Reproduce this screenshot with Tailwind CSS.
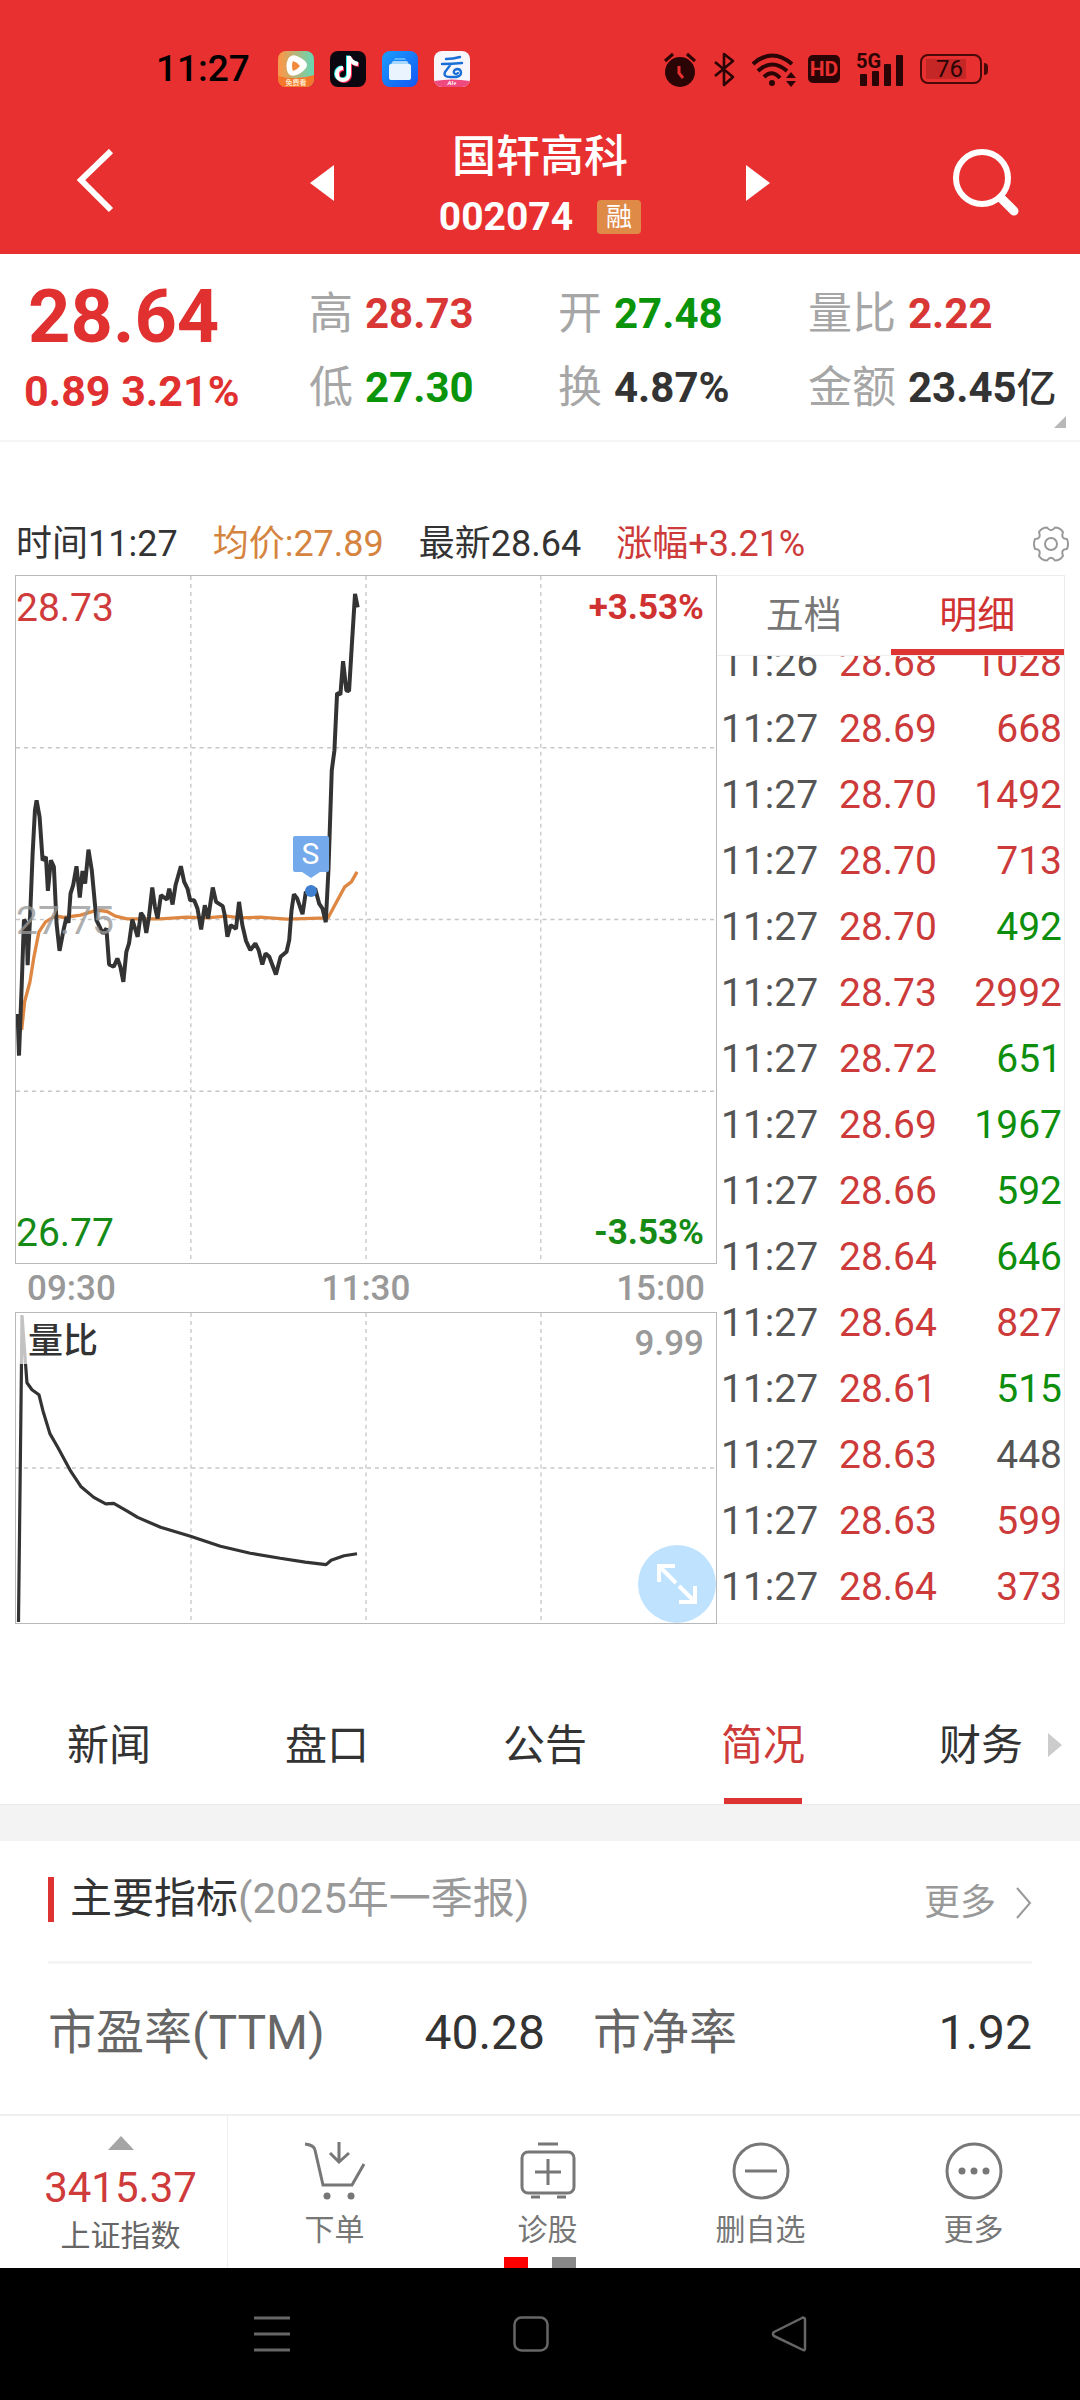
<!DOCTYPE html>
<html lang="zh-CN">
<head>
  <meta charset="UTF-8" />
  <meta name="viewport" content="width=device-width, initial-scale=1" />
  <title>国轩高科 002074</title>
  <script src="https://cdn.jsdelivr.net/npm/@tailwindcss/browser@4"></script>
</head>
<body class="min-h-screen flex flex-col bg-white text-[#333] font-['Roboto','Noto_Sans_CJK_SC',sans-serif]">

  <header class="bg-[#e7302f]">
    <!-- Status bar -->
    <div class="flex items-center justify-between h-[88px] pt-[50px] pl-[156px] pr-[92px] text-[#2b0505]">
      <div class="flex items-center gap-4 h-9">
        <span class="text-[37px] leading-9 font-medium text-black mr-3">11:27</span>
        <svg class="size-9" viewBox="0 0 36 36" aria-hidden="true">
          <defs>
            <linearGradient id="video-bg" x1="0" y1="0" x2="1" y2="0"><stop offset="0.1" stop-color="#f59a4c" /><stop offset="0.9" stop-color="#6fd3ae" /></linearGradient>
            <clipPath id="app-clip"><rect width="36" height="36" rx="8" /></clipPath>
          </defs>
          <g clip-path="url(#app-clip)">
            <rect width="36" height="36" fill="url(#video-bg)" />
            <path d="M0 25q18 5 36-1v12H0z" fill="#f4772c" />
            <path d="M13 5q3-2 8 1 8 4 8 8t-8 9q-8 4-11-1-3-7 0-14 1-2 3-3z" fill="#fff" />
            <path d="M15 10q4 1 7 5-3 4-7 5-2-5 0-10z" fill="#f08a3a" />
            <text x="18" y="34" font-size="7" font-weight="700" text-anchor="middle" fill="#fde6c8">免费看</text>
          </g>
        </svg>
        <svg class="size-9" viewBox="0 0 36 36" aria-hidden="true">
          <rect width="36" height="36" rx="8" fill="#0b0710" />
          <g fill="none" stroke-width="4">
            <path d="M19 5v18a6 6 0 1 1-6-6M19 6q2 6 9 7" stroke="#25f4ee" transform="translate(-1 -0.5)" />
            <path d="M19 5v18a6 6 0 1 1-6-6M19 6q2 6 9 7" stroke="#fe2c55" transform="translate(1 1)" />
            <path d="M19 5v18a6 6 0 1 1-6-6M19 6q2 6 9 7" stroke="#fff" />
          </g>
        </svg>
        <svg class="size-9" viewBox="0 0 36 36" aria-hidden="true">
          <defs><linearGradient id="file-bg" x1="0" y1="0" x2="1" y2="1"><stop offset="0" stop-color="#1b9dfb" /><stop offset="1" stop-color="#1357f5" /></linearGradient></defs>
          <rect width="36" height="36" rx="8" fill="url(#file-bg)" />
          <path d="M13 7h10l1 2H12z" fill="#5db6fb" />
          <path d="M11 10h14l2 3H9z" fill="#a9d8fd" />
          <rect x="7" y="13" width="22" height="16" rx="2" fill="#e9f4ff" />
        </svg>
        <svg class="size-9" viewBox="0 0 36 36" aria-hidden="true">
          <g clip-path="url(#app-clip)">
            <rect width="36" height="36" fill="#f8f6fd" />
            <path d="M0 30q18-3 36 0v6H0z" fill="#ee4a80" />
            <path d="M12 8q7 0 14-2M8 13q10 0 20-1M17 13q-3 4-6 8-2 5 5 5h6q5-1 5-4 0-4-4-4-4 1-3 4 2 2 4 0" fill="none" stroke="#1a6fd6" stroke-width="2.4" stroke-linecap="round" />
            <text x="18" y="34" font-size="6" font-weight="700" font-style="italic" text-anchor="middle" fill="#fff">AI+</text>
          </g>
        </svg>
      </div>
      <div class="flex items-center gap-4 h-9">
        <svg class="w-8 h-9" viewBox="0 0 32 36" aria-hidden="true">
          <circle cx="16" cy="21" r="15" fill="currentColor" />
          <path d="M1 10l8-7M31 10l-8-7" stroke="currentColor" stroke-width="3" />
          <path d="M15 15v7l4 5" fill="none" stroke="#e7302f" stroke-width="3" />
        </svg>
        <svg class="w-6 h-9" viewBox="0 0 24 36" fill="none" stroke="currentColor" stroke-width="2.6" stroke-linejoin="round" aria-hidden="true">
          <path d="M3 11l18 15-9 8V3l9 7L3 25" />
        </svg>
        <svg class="w-11 h-9" viewBox="0 0 44 36" fill="none" stroke="currentColor" stroke-width="4" aria-hidden="true">
          <path d="M1 13q19-17 39 0M6 20q14-13 29 0M12 26q8-8 16 1" />
          <circle cx="20" cy="32" r="3" fill="currentColor" stroke="none" />
          <path d="M34 27l5-6 5 6zM34 30h10l-5 6z" fill="currentColor" stroke="none" />
        </svg>
        <span class="flex items-center justify-center w-8 h-7 -ml-1 rounded-[5px] bg-[#2b0505] text-[#e7302f] text-[21px] leading-7 font-bold">HD</span>
        <div class="relative w-12 h-9">
          <span class="absolute left-0 top-0 text-[20px] leading-5 font-bold">5G</span>
          <svg class="w-12 h-9" viewBox="0 0 48 36" fill="currentColor" aria-hidden="true">
            <rect x="4" y="23" width="7" height="12" rx="1" /><rect x="16" y="20" width="7" height="15" rx="1" /><rect x="28" y="13" width="7" height="22" rx="1" /><rect x="40" y="4" width="7" height="31" rx="1" />
          </svg>
        </div>
        <div class="flex items-center">
          <span class="flex items-center w-[62px] h-[30px] p-1 rounded-lg border-2 border-[#4a0909]">
            <span class="w-[40px] h-5 bg-[#c52626] text-[24px] leading-5 pl-2.5">76</span>
          </span>
          <span class="w-1 h-3 bg-[#4a0909] rounded-r-sm ml-0.5"></span>
        </div>
      </div>
    </div>

    <!-- Title bar -->
    <div class="flex items-center justify-between h-[166px] pl-[76px] pr-[60px] text-white">
      <button aria-label="返回" class="w-10 h-16 mt-5">
        <svg class="w-10 h-16" viewBox="0 0 40 64" fill="none" stroke="currentColor" stroke-width="6" aria-hidden="true"><path d="M35 2L5 31l30 30" /></svg>
      </button>
      <div class="flex items-center justify-between w-[460px] ml-3">
        <button aria-label="上一只"><svg class="w-6 h-9 mt-6" viewBox="0 0 24 36" fill="currentColor" aria-hidden="true"><path d="M0 18L24 0v36z" /></svg></button>
        <div class="pt-8 text-center">
          <h1 class="text-[44px] leading-[56px] font-medium">国轩高科</h1>
          <div class="flex items-center gap-6 mt-1">
            <span class="text-[39px] leading-[56px] font-bold">002074</span>
            <span class="w-11 h-[34px] rounded-sm bg-[#e08a48] text-[26px] leading-[34px]">融</span>
          </div>
        </div>
        <button aria-label="下一只"><svg class="w-6 h-9 mt-6" viewBox="0 0 24 36" fill="currentColor" aria-hidden="true"><path d="M24 18L0 0v36z" /></svg></button>
      </div>
      <button aria-label="搜索" class="mt-6">
        <svg class="w-[68px] h-[68px]" viewBox="0 0 68 68" fill="none" stroke="currentColor" aria-hidden="true">
          <circle cx="30" cy="29" r="26" stroke-width="6" /><path d="M49 49l13 13" stroke-width="9" stroke-linecap="round" />
        </svg>
      </button>
    </div>
  </header>

  <!-- Quote summary -->
  <section class="relative grid grid-cols-[309fr_249fr_250fr_272fr] h-[188px] pt-[23px] border-b-2 border-[#f6f6f6] text-[42px] leading-[74px] font-bold whitespace-nowrap">
    <div class="pl-6 pt-[3px] text-[#e03030]">
      <div class="pl-1 text-[74px]">28.64</div>
      <div class="text-[43px]">0.89 3.21%</div>
    </div>
    <dl>
      <div class="flex gap-3"><dt class="text-[44px] font-normal text-[#a6a6a6]">高</dt><dd class="text-[#d93636]">28.73</dd></div>
      <div class="flex gap-3"><dt class="text-[44px] font-normal text-[#a6a6a6]">低</dt><dd class="text-[#0a940a]">27.30</dd></div>
    </dl>
    <dl>
      <div class="flex gap-3"><dt class="text-[44px] font-normal text-[#a6a6a6]">开</dt><dd class="text-[#0a940a]">27.48</dd></div>
      <div class="flex gap-3"><dt class="text-[44px] font-normal text-[#a6a6a6]">换</dt><dd>4.87%</dd></div>
    </dl>
    <dl>
      <div class="flex gap-3"><dt class="text-[44px] font-normal text-[#a6a6a6]">量比</dt><dd class="text-[#d93636]">2.22</dd></div>
      <div class="flex gap-3"><dt class="text-[44px] font-normal text-[#a6a6a6]">金额</dt><dd>23.45<span class="text-[40px] font-medium">亿</span></dd></div>
    </dl>
    <svg class="absolute right-[14px] bottom-3 size-3" viewBox="0 0 12 12" aria-hidden="true"><path d="M12 0v12H0z" fill="#b8b8b8" /></svg>
  </section>

  <!-- Crosshair info -->
  <div class="flex items-center gap-[35px] h-[62px] mt-[71px] pl-4 pr-[11px] text-[36px] leading-none whitespace-nowrap">
    <span>时间11:27</span>
    <span class="text-[#d5843f]">均价:27.89</span>
    <span>最新28.64</span>
    <span class="text-[#cc3a3a]">涨幅+3.21%</span>
    <button aria-label="设置" class="ml-auto">
      <svg class="w-9 h-[38px]" viewBox="0 0 36 38" fill="none" stroke="#999" stroke-width="2" stroke-linejoin="round" aria-hidden="true">
        <path d="M34 14Q36 19 34 24 27.500 24 30 31 27 35.500 22 35.500 18 30 14 35.500 9 35.500 6 31 8.500 24 2 24 0 19 2 14 8.500 14 6 7 9 2.500 14 2.500 18 8 22 2.500 27 2.500 30 7 27.500 14 34 14z" />
        <circle cx="18" cy="19" r="6" />
      </svg>
    </button>
  </div>

  <main class="grid grid-cols-[702fr_348fr] mx-[15px]">
    <!-- Charts -->
    <div>
      <div class="relative h-[689px] border border-[#b9b9b9]">
        <svg class="absolute inset-0 w-full h-full" viewBox="0 0 2106 2064" preserveAspectRatio="none" fill="none" aria-hidden="true">
          <path d="M526 0v2064M1053 0v2064M1579 0v2064M0 516h2106M0 1032h2106M0 1548h2106" stroke="#c6c6c6" stroke-width="4" stroke-dasharray="12 12" />
          <g transform="translate(-46 -16)" stroke-linejoin="bevel">
            <path stroke="#dd8743" stroke-width="10" d="M63 1380L72 1295 88 1235 100 1160 115 1085 135 1055 165 1037 190 1042 240 1035 290 1020 320 1024 345 1038 380 1046 480 1046 560 1041 620 1043 680 1038 720 1043 780 1041 860 1047 985 1043 1005 1005 1035 950 1055 935 1072 905" />
            <path stroke="#333" stroke-width="12" d="M51 1332L55 1457 63 1250 70 1048 78 1060 81 1185 88 1050 96 850 103 720 108 690 117 740 126 870 136 860 142 962 151 870 160 890 168 1060 177 1142 190 1075 198 1040 204 1058 210 970 218 945 228 888 238 982 246 902 254 940 264 838 274 900 288 1050 300 1075 307 1090 318 1075 326 1183 340 1190 351 1165 360 1190 369 1235 378 1145 386 1120 396 1048 412 1100 422 1028 430 1040 438 1088 446 1040 456 952 464 1010 472 1045 482 975 500 988 507 955 517 1003 526 945 542 888 552 935 562 955 570 990 582 990 592 1015 603 1078 614 1005 624 1045 638 952 648 995 668 1008 674 1035 682 1100 692 1065 708 1076 717 995 727 1065 738 1112 751 1140 766 1120 776 1140 787 1183 797 1150 808 1160 828 1213 842 1160 860 1145 868 1110 875 1020 882 972 892 985 908 1032 918 965 930 970 946 955 958 1000 968 1015 978 1056 986 900 996 600 1004 540 1012 368 1022 372 1030 272 1040 360 1048 362 1056 230 1066 70 1074 110" />
          </g>
        </svg>
        <div class="relative flex flex-col justify-between h-full pt-0.5 text-[39px] leading-[60px]">
          <div class="flex justify-between"><span class="text-[#cf3a3a]">28.73</span><span class="text-[35px] font-bold text-[#d03232] pr-3">+3.53%</span></div>
          <div class="text-[#999]/80">27.75</div>
          <div class="flex justify-between"><span class="text-[#158a15]">26.77</span><span class="text-[35px] font-bold text-[#158a15] pr-3">-3.53%</span></div>
        </div>
        <!-- Sell marker -->
        <div class="absolute left-[39.5%] top-[260px] flex flex-col items-center">
          <span class="w-9 h-9 rounded-xs bg-[#74a9ec] text-white text-[30px] leading-9 text-center">S</span>
          <svg class="w-9 h-7" viewBox="0 0 36 28" aria-hidden="true"><path d="M9 0h18l-9 6z" fill="#74a9ec" /><circle cx="18" cy="19" r="6" fill="#3f7fd0" /></svg>
        </div>
      </div>

      <div class="flex justify-between h-12 pl-3 pr-3 text-[35px] leading-[50px] font-medium text-[#999]">
        <span>09:30</span><span>11:30</span><span>15:00</span>
      </div>

      <div class="relative h-[312px] border border-[#b9b9b9]">
        <svg class="absolute inset-0 w-full h-full" viewBox="0 0 702 311" preserveAspectRatio="none" fill="none" aria-hidden="true">
          <path d="M175.500 0v311M351 0v311M526.500 0v311M0 155.500h702" stroke="#c6c6c6" stroke-width="1.300" stroke-dasharray="4 4" />
          <path stroke="#333" stroke-width="3.200" stroke-linejoin="bevel" d="M2.500 310L5.500 50 6 2 9.500 50 11 70 16 77 23 82 27 98 34 121 42 135 55 159 65 174 78 185 90 191.500 98 191 112 199 122 205 145 215 175 224 205 234 235 241 265 246 290 250 311 252.500 316 248 329 243.500 342 241.500" />
        </svg>
        <div class="relative flex justify-between text-[35px] leading-[41px] font-medium">
          <span class="pl-3 pt-2 bg-white/70">量比</span>
          <span class="pr-3 pt-2.5 text-[#999]">9.99</span>
        </div>
        <button aria-label="全屏" class="absolute right-0 bottom-0 flex items-center justify-center size-[78px] rounded-full bg-[#bfe3ff]">
          <svg class="size-10" viewBox="0 0 40 40" fill="none" stroke="#fff" stroke-width="4" aria-hidden="true"><path d="M18 2H2v16M2 2l17 17M38 22v16H22M38 38L22 22" /></svg>
        </button>
      </div>
    </div>

    <!-- Trade ticks -->
    <div class="flex flex-col h-[1049px] border border-l-0 border-[#ececec]">
      <div class="grid grid-cols-2 shrink-0 h-20 border-b border-[#eee] text-[38px]">
        <button class="text-[#777]">五档</button>
        <button class="text-[#d03232] border-b-6 border-[#dd3333] pt-1.5">明细</button>
      </div>
      <div class="flex flex-col justify-end flex-1 min-h-0 overflow-hidden pb-[3px]">
        <table class="w-full text-[39px] leading-none">
          <tbody id="ticks"></tbody>
        </table>
      </div>
    </div>
  </main>

  <!-- Section tabs -->
  <nav class="relative mt-[63px] h-[117px] overflow-hidden text-[42px] leading-none">
    <div class="grid grid-cols-5 w-[calc(100%+10px)] h-full">
      <button>新闻</button>
      <button>盘口</button>
      <button>公告</button>
      <button class="flex flex-col items-center justify-between pt-[38px] text-[#cc3a3a]">简况<span class="w-[78px] h-1.5 bg-[#dd3333]"></span></button>
      <button>财务</button>
    </div>
    <svg class="absolute right-[18px] top-[46px] w-3.5 h-6" viewBox="0 0 14 24" aria-hidden="true"><path d="M0 0l14 12L0 24z" fill="#ccc" /></svg>
  </nav>

  <div class="h-[37px] bg-[#f3f3f3] border-t border-[#e9e9e9]"></div>

  <!-- Key indicators -->
  <section class="px-12">
    <div class="flex items-center h-[123px] pb-1 border-b-3 border-[#f5f3f3]">
      <span class="w-1.5 h-[45px] mr-4 bg-[#dd3333]"></span>
      <h2 class="text-[42px] leading-none">主要指标<span class="text-[#999]">(2025年一季报)</span></h2>
      <a href="#" class="flex items-center gap-5 ml-auto pt-2 text-[36px] leading-none text-[#999]">更多
        <svg class="w-4 h-8" viewBox="0 0 16 32" fill="none" stroke="currentColor" stroke-width="2" aria-hidden="true"><path d="M1 1l13 15L1 31" /></svg>
      </a>
    </div>
    <dl class="grid grid-cols-[497fr_439fr] gap-12 h-[138px] text-[48px] leading-[138px]">
      <div class="flex justify-between"><dt class="text-[#666]">市盈率(TTM)</dt><dd>40.28</dd></div>
      <div class="flex justify-between"><dt class="text-[#666]">市净率</dt><dd>1.92</dd></div>
    </dl>
  </section>

  <footer class="mt-auto">
    <div class="relative grid grid-cols-[228fr_213fr_213fr_213fr_213fr] h-[154px] border-t-2 border-[#efefef] text-[30px] leading-9 text-[#777]">
      <button class="flex flex-col items-center pt-5 pl-3.5 border-r border-[#eee]">
        <svg class="w-[26px] h-3.5" viewBox="0 0 26 14" aria-hidden="true"><path d="M13 0l13 14H0z" fill="#a5a5a5" /></svg>
        <span class="mt-2 text-[42px] leading-[60px] text-[#cf3a3a]">3415.37</span>
        <span class="text-[#666]">上证指数</span>
      </button>
      <button class="flex flex-col items-center pt-[26px]">
        <svg class="w-[62px] h-[58px]" viewBox="0 0 62 58" fill="none" stroke="currentColor" stroke-width="3" aria-hidden="true">
          <path d="M1 2q9 1 10 6l8 35h29l12-21" /><path d="M35 0v19M26 11l9 9 10-9" />
          <circle cx="23" cy="54" r="3.500" fill="currentColor" stroke="none" /><circle cx="47" cy="54" r="3.500" fill="currentColor" stroke="none" />
        </svg>
        <span class="mt-3">下单</span>
      </button>
      <button class="flex flex-col items-center pt-[26px]">
        <svg class="w-[56px] h-[58px]" viewBox="0 0 56 58" fill="none" stroke="currentColor" stroke-width="3" aria-hidden="true">
          <rect x="2" y="10" width="52" height="41" rx="6" /><path d="M18 2h20M28 17v26M15 30h26M11 55h9M37 55h9" />
        </svg>
        <span class="mt-3">诊股</span>
      </button>
      <button class="flex flex-col items-center pt-[26px]">
        <svg class="w-[58px] h-[58px]" viewBox="0 0 58 58" fill="none" stroke="currentColor" stroke-width="3" aria-hidden="true"><circle cx="29" cy="29" r="27" /><path d="M13 29h32" /></svg>
        <span class="mt-3">删自选</span>
      </button>
      <button class="flex flex-col items-center pt-[26px]">
        <svg class="w-[58px] h-[58px]" viewBox="0 0 58 58" aria-hidden="true">
          <circle cx="29" cy="29" r="27" fill="none" stroke="currentColor" stroke-width="3" />
          <g fill="currentColor"><circle cx="17" cy="29" r="3.500" /><circle cx="29" cy="29" r="3.500" /><circle cx="41" cy="29" r="3.500" /></g>
        </svg>
        <span class="mt-3">更多</span>
      </button>
      <!-- Page indicator -->
      <div class="absolute bottom-0 left-1/2 -translate-x-1/2 flex gap-6"><span class="w-6 h-[11px] bg-[#f00]"></span><span class="w-6 h-[11px] bg-[#888]"></span></div>
    </div>

    <!-- System navigation -->
    <div class="flex items-center justify-between h-[132px] pl-[254px] pr-[273px] bg-black text-[#666]">
      <button aria-label="最近任务"><svg class="size-9" viewBox="0 0 36 36" stroke="currentColor" stroke-width="3" aria-hidden="true"><path d="M0 2h36M0 18h36M0 34h36" /></svg></button>
      <button aria-label="主页"><svg class="size-9" viewBox="0 0 36 36" fill="none" stroke="currentColor" stroke-width="2.500" aria-hidden="true"><rect x="1.500" y="1.500" width="33" height="33" rx="7" /></svg></button>
      <button aria-label="返回"><svg class="size-9" viewBox="0 0 36 36" fill="none" stroke="currentColor" stroke-width="2.500" stroke-linejoin="round" aria-hidden="true"><path d="M33 2q1 0 1 2v28q0 3-2 2L3 20q-2-2 0-4L31 2q1-1 2 0z" /></svg></button>
    </div>
  </footer>

  <script>
    const up = 'text-[#cc3a3a]';
    const down = 'text-[#0d8f0d]';
    const flat = 'text-[#555]';

    const ticks = [
      ['11:26', '28.68', '1028', up],
      ['11:27', '28.69', '668', up],
      ['11:27', '28.70', '1492', up],
      ['11:27', '28.70', '713', up],
      ['11:27', '28.70', '492', down],
      ['11:27', '28.73', '2992', up],
      ['11:27', '28.72', '651', down],
      ['11:27', '28.69', '1967', down],
      ['11:27', '28.66', '592', down],
      ['11:27', '28.64', '646', down],
      ['11:27', '28.64', '827', up],
      ['11:27', '28.61', '515', down],
      ['11:27', '28.63', '448', flat],
      ['11:27', '28.63', '599', up],
      ['11:27', '28.64', '373', up],
    ];

    document.getElementById('ticks').innerHTML = ticks.map(([time, price, volume, color]) => `
      <tr class="h-[66px]">
        <td class="w-[122px] pl-1 text-[#555]">${time}</td>
        <td class="text-[#cc3a3a]">${price}</td>
        <td class="pr-0.5 text-right ${color}">${volume}</td>
      </tr>`).join('');
  </script>
</body>
</html>
